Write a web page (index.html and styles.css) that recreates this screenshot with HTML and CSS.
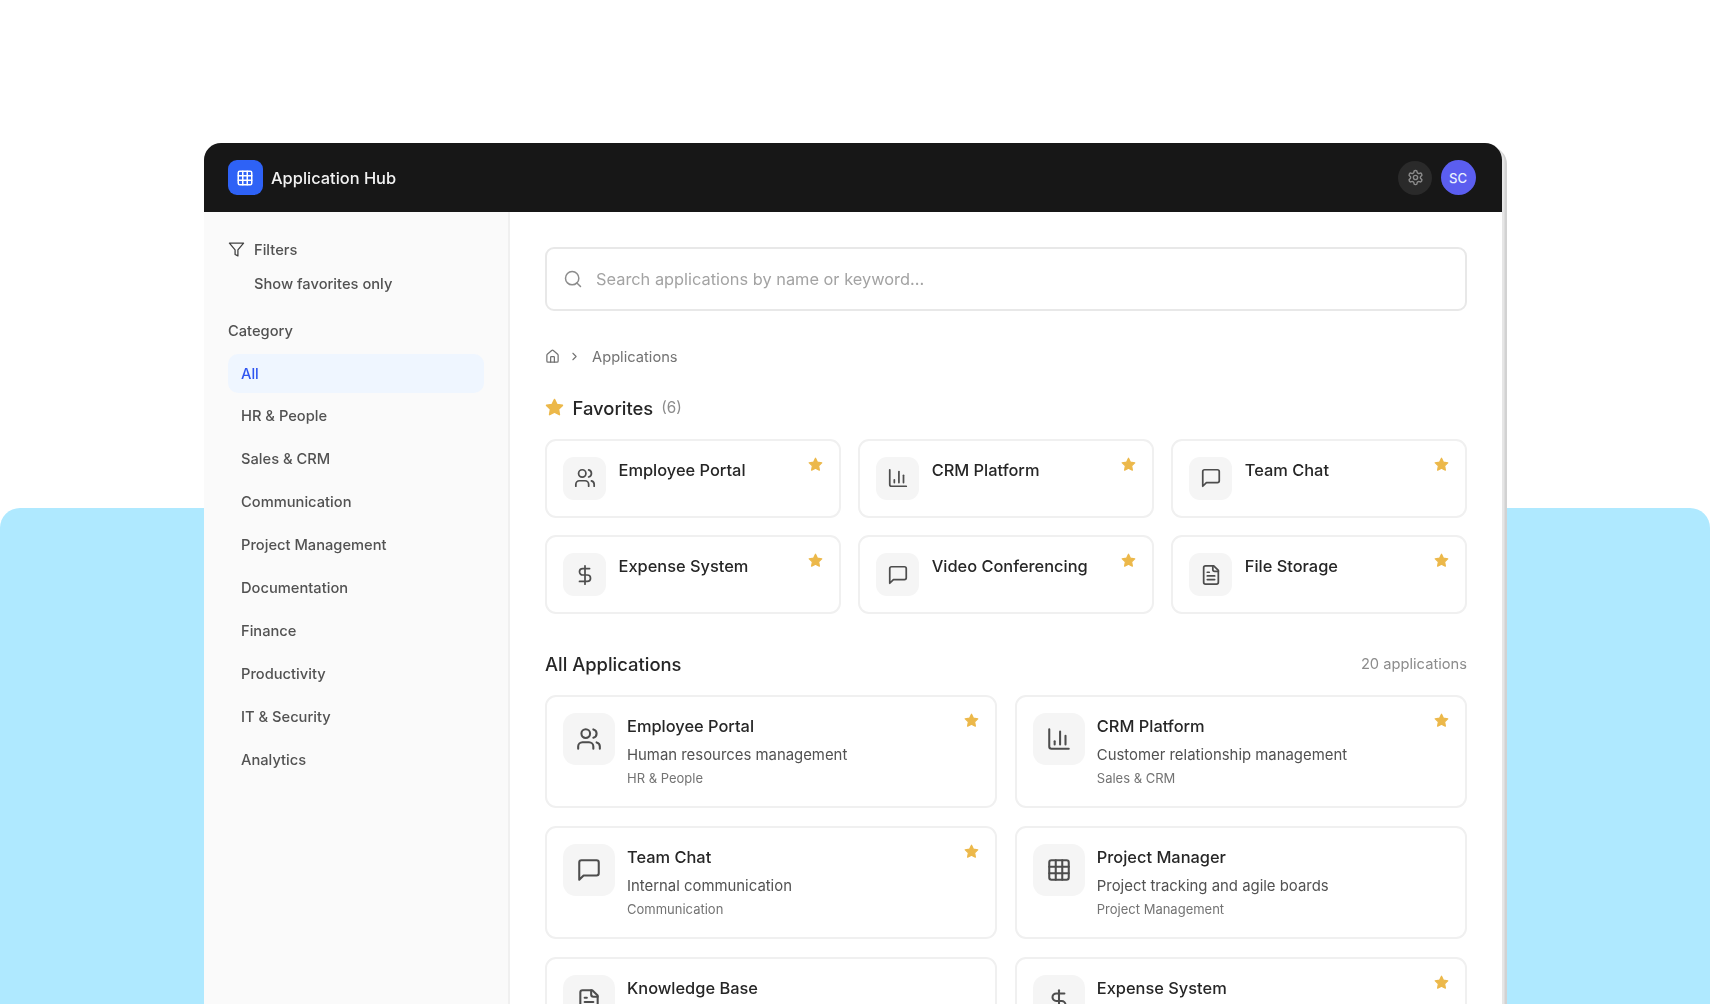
FILE: index.html
```html
<!DOCTYPE html>
<html lang="en">
<head>
<meta charset="utf-8">
<title>Application Hub</title>
<link rel="stylesheet" href="styles.css">
</head>
<body>
<svg class="sprite" aria-hidden="true">
  <symbol id="i-users" viewBox="0 0 24 24"><path d="M16 21v-2a4 4 0 0 0-4-4H6a4 4 0 0 0-4 4v2"/><circle cx="9" cy="7" r="4"/><path d="M22 21v-2a4 4 0 0 0-3-3.87"/><path d="M16 3.13a4 4 0 0 1 0 7.75"/></symbol>
  <symbol id="i-chart" viewBox="0 0 24 24"><path d="M3 3v16a2 2 0 0 0 2 2h16"/><path d="M18 17V9"/><path d="M13 17V5"/><path d="M8 17v-3"/></symbol>
  <symbol id="i-chat" viewBox="0 0 24 24"><path d="M21 15a2 2 0 0 1-2 2H7l-4 4V5a2 2 0 0 1 2-2h14a2 2 0 0 1 2 2z"/></symbol>
  <symbol id="i-dollar" viewBox="0 0 24 24"><line x1="12" y1="2" x2="12" y2="22"/><path d="M17 5H9.5a3.5 3.5 0 0 0 0 7h5a3.5 3.5 0 0 1 0 7H6"/></symbol>
  <symbol id="i-file" viewBox="0 0 24 24"><path d="M15 2H6a2 2 0 0 0-2 2v16a2 2 0 0 0 2 2h12a2 2 0 0 0 2-2V7Z"/><path d="M14 2v4a2 2 0 0 0 2 2h4"/><path d="M10 9H8"/><path d="M16 13H8"/><path d="M16 17H8"/></symbol>
  <symbol id="i-grid" viewBox="0 0 24 24"><rect x="3" y="3" width="18" height="18" rx="2"/><path d="M3 9h18"/><path d="M3 15h18"/><path d="M9 3v18"/><path d="M15 3v18"/></symbol>
  <symbol id="i-home" viewBox="0 0 24 24"><path d="M15 21v-8a1 1 0 0 0-1-1h-4a1 1 0 0 0-1 1v8"/><path d="M3 10a2 2 0 0 1 .709-1.528l7-5.999a2 2 0 0 1 2.582 0l7 5.999A2 2 0 0 1 21 10v9a2 2 0 0 1-2 2H5a2 2 0 0 1-2-2z"/></symbol>
  <symbol id="i-filter" viewBox="0 0 24 24"><polygon points="22 3 2 3 10 12.46 10 19 14 21 14 12.46 22 3"/></symbol>
  <symbol id="i-search" viewBox="0 0 24 24"><circle cx="11" cy="11" r="8"/><path d="m21 21-4.3-4.3"/></symbol>
  <symbol id="i-chevron" viewBox="0 0 24 24"><path d="m9 18 6-6-6-6"/></symbol>
  <symbol id="i-star" viewBox="0 0 24 24"><polygon points="12 2 15.09 8.26 22 9.27 17 14.14 18.18 21.02 12 17.77 5.82 21.02 7 14.14 2 9.27 8.91 8.26 12 2"/></symbol>
  <symbol id="i-gear" viewBox="0 0 24 24"><path d="M12.22 2h-.44a2 2 0 0 0-2 2v.18a2 2 0 0 1-1 1.73l-.43.25a2 2 0 0 1-2 0l-.15-.08a2 2 0 0 0-2.73.73l-.22.38a2 2 0 0 0 .73 2.73l.15.1a2 2 0 0 1 1 1.72v.51a2 2 0 0 1-1 1.74l-.15.09a2 2 0 0 0-.73 2.73l.22.38a2 2 0 0 0 2.73.73l.15-.08a2 2 0 0 1 2 0l.43.25a2 2 0 0 1 1 1.73V20a2 2 0 0 0 2 2h.44a2 2 0 0 0 2-2v-.18a2 2 0 0 1 1-1.73l.43-.25a2 2 0 0 1 2 0l.15.08a2 2 0 0 0 2.73-.73l.22-.39a2 2 0 0 0-.73-2.73l-.15-.08a2 2 0 0 1-1-1.74v-.5a2 2 0 0 1 1-1.74l.15-.09a2 2 0 0 0 .73-2.73l-.22-.38a2 2 0 0 0-2.73-.73l-.15.08a2 2 0 0 1-2 0l-.43-.25a2 2 0 0 1-1-1.73V4a2 2 0 0 0-2-2z"/><circle cx="12" cy="12" r="3"/></symbol>
</svg>

<div class="stage">
  <div class="backdrop"></div>
  <div class="window">
    <header class="topbar">
      <div class="brand">
        <span class="logo"><svg class="ico logo-ico"><use href="#i-grid"/></svg></span>
        <span class="brand-name">Application Hub</span>
      </div>
      <div class="top-actions">
        <span class="gear-btn"><svg class="ico gear-ico"><use href="#i-gear"/></svg></span>
        <span class="avatar">SC</span>
      </div>
    </header>
    <div class="body">
      <aside class="sidebar">
        <div class="filters"><svg class="ico filter-ico"><use href="#i-filter"/></svg><span>Filters</span></div>
        <div class="fav-only">Show favorites only</div>
        <div class="cat-label">Category</div>
        <nav class="cats">
          <a class="cat active">All</a>
          <a class="cat">HR &amp; People</a>
          <a class="cat">Sales &amp; CRM</a>
          <a class="cat">Communication</a>
          <a class="cat">Project Management</a>
          <a class="cat">Documentation</a>
          <a class="cat">Finance</a>
          <a class="cat">Productivity</a>
          <a class="cat">IT &amp; Security</a>
          <a class="cat">Analytics</a>
        </nav>
      </aside>
      <main class="main">
        <label class="search">
          <svg class="ico search-ico"><use href="#i-search"/></svg>
          <input class="search-input" type="text" placeholder="Search applications by name or keyword...">
        </label>
        <div class="crumbs">
          <svg class="ico home-ico"><use href="#i-home"/></svg>
          <svg class="ico chev-ico"><use href="#i-chevron"/></svg>
          <span>Applications</span>
        </div>
        <h2 class="fav-head"><svg class="ico star-big"><use href="#i-star"/></svg><span>Favorites</span><span class="fav-count">(6)</span></h2>
        <div class="fav-grid">
          <div class="fav-card"><span class="tile"><svg class="ico"><use href="#i-users"/></svg></span><span class="fav-title">Employee Portal</span><svg class="ico star"><use href="#i-star"/></svg></div>
          <div class="fav-card"><span class="tile"><svg class="ico"><use href="#i-chart"/></svg></span><span class="fav-title">CRM Platform</span><svg class="ico star"><use href="#i-star"/></svg></div>
          <div class="fav-card"><span class="tile"><svg class="ico"><use href="#i-chat"/></svg></span><span class="fav-title">Team Chat</span><svg class="ico star"><use href="#i-star"/></svg></div>
          <div class="fav-card"><span class="tile"><svg class="ico"><use href="#i-dollar"/></svg></span><span class="fav-title">Expense System</span><svg class="ico star"><use href="#i-star"/></svg></div>
          <div class="fav-card"><span class="tile"><svg class="ico"><use href="#i-chat"/></svg></span><span class="fav-title">Video Conferencing</span><svg class="ico star"><use href="#i-star"/></svg></div>
          <div class="fav-card"><span class="tile"><svg class="ico"><use href="#i-file"/></svg></span><span class="fav-title">File Storage</span><svg class="ico star"><use href="#i-star"/></svg></div>
        </div>
        <div class="all-head"><h2>All Applications</h2><span class="all-count">20 applications</span></div>
        <div class="app-grid">
          <div class="app-card"><span class="tile tile-lg"><svg class="ico"><use href="#i-users"/></svg></span><div class="app-text"><div class="app-title">Employee Portal</div><div class="app-desc">Human resources management</div><div class="app-cat">HR &amp; People</div></div><svg class="ico star"><use href="#i-star"/></svg></div>
          <div class="app-card"><span class="tile tile-lg"><svg class="ico"><use href="#i-chart"/></svg></span><div class="app-text"><div class="app-title">CRM Platform</div><div class="app-desc">Customer relationship management</div><div class="app-cat">Sales &amp; CRM</div></div><svg class="ico star"><use href="#i-star"/></svg></div>
          <div class="app-card"><span class="tile tile-lg"><svg class="ico"><use href="#i-chat"/></svg></span><div class="app-text"><div class="app-title">Team Chat</div><div class="app-desc">Internal communication</div><div class="app-cat">Communication</div></div><svg class="ico star"><use href="#i-star"/></svg></div>
          <div class="app-card"><span class="tile tile-lg"><svg class="ico"><use href="#i-grid"/></svg></span><div class="app-text"><div class="app-title">Project Manager</div><div class="app-desc">Project tracking and agile boards</div><div class="app-cat">Project Management</div></div></div>
          <div class="app-card"><span class="tile tile-lg"><svg class="ico"><use href="#i-file"/></svg></span><div class="app-text"><div class="app-title">Knowledge Base</div></div></div>
          <div class="app-card"><span class="tile tile-lg"><svg class="ico"><use href="#i-dollar"/></svg></span><div class="app-text"><div class="app-title">Expense System</div></div><svg class="ico star"><use href="#i-star"/></svg></div>
        </div>
      </main>
    </div>
  </div>
</div>
</body>
</html>
```

FILE: styles.css
```css
* { box-sizing: border-box; }
html, body { margin: 0; padding: 0; background: #fff; }
body { font-family: Inter, "Liberation Sans", sans-serif; color: #262626; }
.sprite { display: none; }
.ico { fill: none; stroke: currentColor; stroke-width: 2; stroke-linecap: round; stroke-linejoin: round; display: block; flex: none; }

.stage { position: relative; width: 1710px; height: 1004px; overflow: hidden; padding: 143px 0 0 204px; filter: blur(0.45px); }
.backdrop { position: absolute; left: 0; right: 0; top: 508px; bottom: -30px; background: #afe9ff; border-radius: 20px 20px 0 0; }

.window { position: relative; width: 1297.5px; height: 900px; background: #fff; border-radius: 17px 17px 0 0; box-shadow: 2.5px 2px 0 #e6e6e6, 5px 4px 0 #d2d2d2; }

.topbar { height: 69px; background: #171717; border-radius: 17px 17px 0 0; display: flex; align-items: center; justify-content: space-between; padding: 0 26px 0 24px; }
.brand { display: flex; align-items: center; gap: 8.5px; }
.logo { width: 34.5px; height: 34.5px; border-radius: 9px; background: #2e62f6; display: flex; align-items: center; justify-content: center; color: #fff; }
.logo-ico { width: 18px; height: 18px; }
.brand-name { font-size: 16.4px; font-weight: 500; color: #f2f2f2; }
.top-actions { display: flex; align-items: center; gap: 8.5px; }
.gear-btn { width: 34px; height: 34px; border-radius: 50%; background: #2a2a2a; display: flex; align-items: center; justify-content: center; color: #8c8c8c; }
.gear-ico { width: 17px; height: 17px; }
.avatar { width: 35px; height: 35px; border-radius: 50%; background: #5b5ef0; color: #e8f0ff; font-size: 13.1px; font-weight: 500; display: flex; align-items: center; justify-content: center; }

.body { display: flex; }
.sidebar { width: 306px; min-height: 800px; flex: none; background: #fafafa; border-right: 2px solid #f0f0f0; padding: 25.5px 24px 0; color: #525252; font-size: 14.7px; }
.filters { display: flex; align-items: center; gap: 9px; height: 24px; font-weight: 500; }
.filter-ico { width: 17px; height: 17px; color: #404040; stroke-width: 1.8; }
.fav-only { height: 24px; line-height: 24px; margin-top: 10px; padding-left: 26px; font-weight: 500; }
.cat-label { height: 24px; line-height: 24px; margin-top: 23px; font-weight: 500; }
.cats { display: flex; flex-direction: column; gap: 3.9px; margin-top: 11px; }
.cat { height: 39px; line-height: 41px; padding-left: 13px; border-radius: 10px; font-weight: 500; color: #525252; }
.cat.active { background: #eff6ff; color: #2f55f0; }

.main { flex: 1; min-width: 0; padding: 35px 34.5px 0 35px; }
.search { display: flex; align-items: center; gap: 13px; height: 64px; border: 2px solid #e8e8e8; border-radius: 9px; padding: 0 16px; background: #fff; color: #8c8c8c; }
.search-ico { width: 20px; height: 20px; stroke-width: 1.8; }
.search-input { flex: 1; border: 0; outline: 0; background: none; font: 400 16.36px Inter, "Liberation Sans", sans-serif; color: #262626; padding: 0; }
.search-input::placeholder { color: #a3a3a3; opacity: 1; }

.crumbs { display: flex; align-items: center; height: 24px; margin-top: 33.5px; font-size: 14.7px; color: #737373; }
.home-ico { width: 15px; height: 15px; }
.chev-ico { width: 13px; height: 13px; margin: 0 11px 0 8px; }

.fav-head { display: flex; align-items: center; height: 28px; margin: 25px 0 0; font-size: 18.4px; font-weight: 500; color: #262626; }
.star-big { width: 19px; height: 19px; fill: #ecb84a; stroke: #ecb84a; margin-right: 8.5px; }
.fav-count { font-size: 15.27px; font-weight: 400; color: #8c8c8c; margin-left: 8px; }

.fav-grid { display: grid; grid-template-columns: repeat(3, 1fr); column-gap: 17.4px; row-gap: 17.5px; margin-top: 17px; }
.fav-card { display: flex; height: 79px; border: 2px solid #f0f0f0; border-radius: 11px; padding: 16px; background: #fff; }
.tile { width: 43px; height: 43px; flex: none; border-radius: 11px; background: #f5f5f5; display: flex; align-items: center; justify-content: center; color: #4d4d4d; }
.tile .ico { width: 22px; height: 22px; stroke-width: 1.9; }
.fav-title { flex: 1; margin-left: 12.5px; font-size: 16.4px; line-height: 26px; font-weight: 500; color: #262626; }
.star { width: 15px; height: 15px; fill: #ecb84a; stroke: #ecb84a; }

.all-head { display: flex; align-items: center; justify-content: space-between; height: 30px; margin-top: 34.5px; }
.all-head h2 { margin: 0; font-size: 18.4px; font-weight: 500; color: #262626; }
.all-count { font-size: 14.7px; color: #8c8c8c; }

.app-grid { display: grid; grid-template-columns: repeat(2, 1fr); column-gap: 17.6px; row-gap: 17.5px; margin-top: 16px; }
.app-card { display: flex; min-height: 113.5px; border: 2px solid #f0f0f0; border-radius: 11px; padding: 16px; background: #fff; }
.tile-lg { width: 52px; height: 52px; border-radius: 13px; }
.tile-lg .ico { width: 26px; height: 26px; }
.app-text { flex: 1; margin-left: 12px; }
.app-title { font-size: 16.4px; line-height: 26px; font-weight: 500; color: #262626; }
.app-desc { font-size: 14.9px; line-height: 24px; margin-top: 4px; color: #525252; }
.app-cat { font-size: 13px; line-height: 19px; margin-top: 2.5px; color: #737373; }
```
